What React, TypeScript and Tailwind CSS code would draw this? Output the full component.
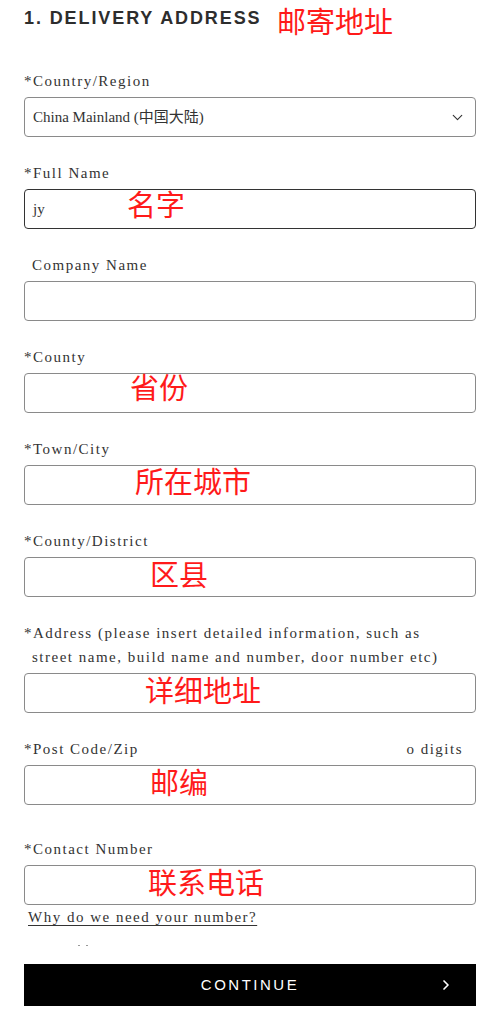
import React from "react";
import { ChevronDown, ChevronRight } from "lucide-react";

const serif = { fontFamily: '"Liberation Serif", "Noto Sans CJK SC", serif' };

function Note({ text, left, top }: { text: string; left: number; top: number }) {
  return (
    <span
      className="absolute text-[29px] leading-none text-[#ff1a1a] whitespace-nowrap pointer-events-none"
      style={{ left, top, fontFamily: '"Noto Sans CJK SC", sans-serif' }}
    >
      {text}
    </span>
  );
}

function Field({
  label,
  note,
  value,
  focused,
  right,
  indent,
  className = "mb-6",
}: {
  label: React.ReactNode;
  note?: { text: string; left: number; top: number };
  value?: string;
  focused?: boolean;
  right?: string;
  indent?: boolean;
  className?: string;
}) {
  return (
    <div className={className}>
      <div
        className={`flex justify-between text-[15px] leading-[24px] tracking-[1.5px] text-[#333] mb-1 ${indent ? "pl-2" : ""}`}
        style={serif}
      >
        <span>{label}</span>
        {right && <span className="pr-[13px]">{right}</span>}
      </div>
      <div
        className={`relative h-10 rounded-[4px] border ${focused ? "border-[#333]" : "border-[#8a8a8a]"} flex items-center pl-2 text-[15px] text-[#333]`}
        style={serif}
      >
        {value}
        {note && <Note {...note} />}
      </div>
    </div>
  );
}

export default function App() {
  return (
    <div className="w-[500px] bg-white px-6 pt-[6px] pb-4">
      <div className="relative h-6 mb-[39px]">
        <h2
          className="text-[18px] leading-[24px] font-bold tracking-[1.9px] text-[#2d2d2d]"
          style={{ fontFamily: '"Liberation Sans", Arial, sans-serif' }}
        >
          1. DELIVERY ADDRESS
        </h2>
        <Note text="邮寄地址" left={253} top={0} />
      </div>

      <div className="mb-6">
        <div className="text-[15px] leading-[24px] tracking-[1.5px] text-[#333] mb-1" style={serif}>
          *Country/Region
        </div>
        <div
          className="relative h-10 rounded-[4px] border border-[#8a8a8a] flex items-center justify-between pl-2 pr-[9px] text-[15px] text-[#333]"
          style={serif}
        >
          <span>China Mainland (中国大陆)</span>
          <ChevronDown size={17} strokeWidth={1.6} color="#333" />
        </div>
      </div>

      <Field label="*Full Name" value="jy" focused note={{ text: "名字", left: 102, top: -1 }} />
      <Field label="Company Name" indent />
      <Field label="*County" note={{ text: "省份", left: 105, top: -2 }} />
      <Field label="*Town/City" note={{ text: "所在城市", left: 110, top: 0 }} />
      <Field label="*County/District" note={{ text: "区县", left: 125, top: 1 }} />

      <div className="mb-6">
        <div className="text-[15px] leading-[24px] tracking-[1.5px] text-[#333] mb-1" style={serif}>
          <div>*Address (please insert detailed information, such as</div>
          <div className="pl-2">street name, build name and number, door number etc)</div>
        </div>
        <div className="relative h-10 rounded-[4px] border border-[#8a8a8a]">
          <Note text="详细地址" left={120} top={1} />
        </div>
      </div>

      <Field
        label="*Post Code/Zip"
        right="o digits"
        note={{ text: "邮编", left: 125, top: 1 }}
        className="mb-8"
      />

      <Field label="*Contact Number" note={{ text: "联系电话", left: 123, top: 1 }} className="mb-0" />

      <div className="mt-[2px] h-5 leading-[20px] pl-1 text-[15px] tracking-[1.5px] text-[#333]" style={serif}>
        <span className="underline underline-offset-[3px] decoration-[1px]">Why do we need your number?</span>
      </div>

      <div className="h-[37px] relative">
        <div className="flex gap-[6px] pl-[54px] pt-[18px]">
          <span className="w-[2px] h-[1px] bg-[#999]" />
          <span className="w-[2px] h-[1px] bg-[#999]" />
        </div>
      </div>

      <button
        className="relative w-full h-[42px] bg-black text-white flex items-center justify-center text-[15px] tracking-[2.5px]"
        style={{ fontFamily: '"Liberation Sans", Arial, sans-serif' }}
      >
        CONTINUE
        <ChevronRight size={16} strokeWidth={2.5} className="absolute right-[22px] top-[13px]" />
      </button>
    </div>
  );
}
